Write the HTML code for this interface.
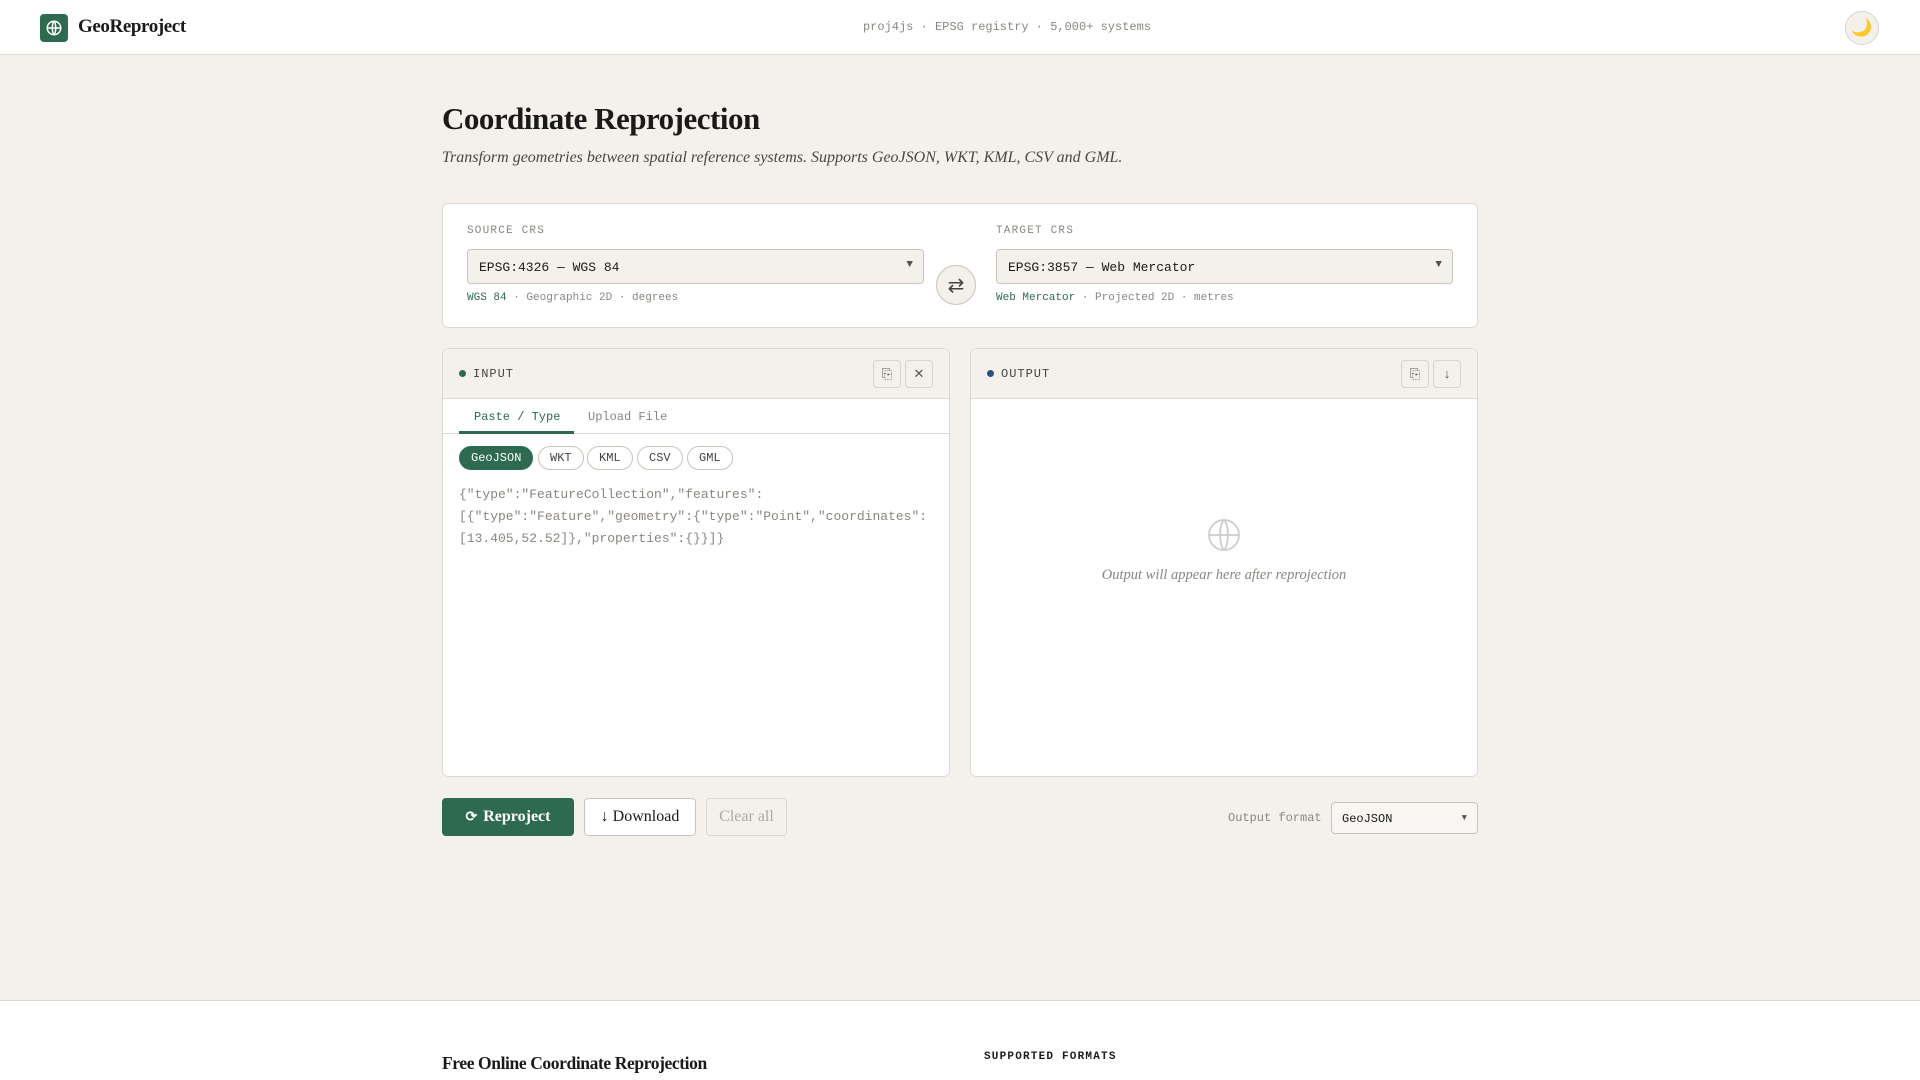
<!DOCTYPE html>
<html><head><meta charset="utf-8"><style>
*{box-sizing:border-box;margin:0;padding:0}
body{width:1920px;height:1080px;overflow:hidden;background:#f4f1ec;font-family:"Liberation Serif",serif;color:#1a1a1a;position:relative}
.mono{font-family:"Liberation Mono",monospace}
.abs{position:absolute}
header{position:absolute;left:0;top:0;width:1920px;height:55px;background:#fff;border-bottom:1px solid #dedad2}
.logo{left:40px;top:14px;width:28px;height:28px;background:#2d6a4f;border-radius:4px;display:flex;align-items:center;justify-content:center}
.brand{left:78px;top:16px;font-size:19px;font-weight:bold;letter-spacing:-0.4px}
.center{left:0;width:2014px;text-align:center;top:20px;font-size:12px;color:#8a8680}
.moon{left:1845px;top:11px;width:34px;height:34px;border-radius:50%;border:1px solid #d8d4cc;background:#f4f1ec;display:flex;align-items:center;justify-content:center;font-size:17px}
h1{position:absolute;left:442px;top:101px;font-size:31px;font-weight:bold;letter-spacing:-0.5px}
.sub{left:442px;top:149px;font-size:16px;font-style:italic;color:#4a4742}
.card{background:#fff;border:1px solid #dedad2;border-radius:6px}
.lbl{font-size:11px;color:#8a8680;letter-spacing:1.2px}
.sel{height:35px;border:1px solid #c9c4ba;border-radius:4px;background:#f4f1ec;font-size:13px;padding:10px 11px;color:#1a1a1a}
.sel .arr{position:absolute;right:10px;top:9px;font-size:11px;color:#555}
.info{font-size:11px;color:#8a8680}
.info b{font-weight:normal;color:#2d6a4f}
.phead{position:absolute;left:0;top:0;right:0;height:50px;background:#f4f1ec;border-bottom:1px solid #dedad2;border-radius:6px 6px 0 0}
.ptitle{position:absolute;left:16px;top:18px;font-size:12px;color:#444;letter-spacing:1px}
.dot{display:inline-block;width:7px;height:7px;border-radius:50%;margin-right:7px;vertical-align:0px}
.ib{position:absolute;top:11px;width:28px;height:28px;border:1px solid #d8d4cc;border-radius:4px;background:#f4f1ec;font-size:13px;color:#555;display:flex;align-items:center;justify-content:center}
.chip{position:absolute;top:446px;height:24px;border:1px solid #c9c4ba;border-radius:12px;font-size:12px;color:#444;padding:4px 11px;background:#fff}
.btn{position:absolute;top:798px;height:38px;border-radius:4px;font-size:16px;display:flex;align-items:center;justify-content:center}
</style></head><body>
<header>
<div class="abs logo"><svg width="18" height="18" viewBox="0 0 24 24" fill="none" stroke="#fff" stroke-width="2"><circle cx="12" cy="12" r="9"/><path d="M3 12h18M12 3c3 3 3 15 0 18M12 3c-3 3-3 15 0 18"/></svg></div>
<div class="abs brand">GeoReproject</div>
<div class="abs center mono">proj4js · EPSG registry · 5,000+ systems</div>
<div class="abs moon">🌙</div>
</header>
<h1>Coordinate Reprojection</h1>
<div class="abs sub">Transform geometries between spatial reference systems. Supports GeoJSON, WKT, KML, CSV and GML.</div>

<div class="abs card" style="left:442px;top:203px;width:1036px;height:125px"></div>
<div class="abs lbl mono" style="left:467px;top:225px">SOURCE CRS</div>
<div class="abs lbl mono" style="left:996px;top:225px">TARGET CRS</div>
<div class="abs sel mono" style="left:467px;top:249px;width:457px">EPSG:4326 — WGS 84<span class="arr">▼</span></div>
<div class="abs sel mono" style="left:996px;top:249px;width:457px">EPSG:3857 — Web Mercator<span class="arr">▼</span></div>
<div class="abs info mono" style="left:467px;top:292px"><b>WGS 84</b> · Geographic 2D · degrees</div>
<div class="abs info mono" style="left:996px;top:292px"><b>Web Mercator</b> · Projected 2D · metres</div>
<div class="abs" style="left:936px;top:265px;width:40px;height:40px;border-radius:50%;border:1px solid #c9c4ba;background:#f4f1ec;display:flex;align-items:center;justify-content:center;font-size:20px;color:#444">⇄</div>

<div class="abs card" style="left:442px;top:348px;width:508px;height:429px">
<div class="phead"><div class="ptitle mono"><span class="dot" style="background:#2d6a4f"></span>INPUT</div>
<div class="ib" style="left:430px">⎘</div><div class="ib" style="left:462px">✕</div></div>
<div class="abs" style="left:0;right:0;top:84px;border-bottom:1px solid #dedad2"></div>
<div class="abs mono" style="left:31px;top:61px;font-size:12px;color:#2d6a4f">Paste / Type</div>
<div class="abs mono" style="left:145px;top:61px;font-size:12px;color:#8a8680">Upload File</div>
<div class="abs" style="left:16px;top:82px;width:115px;height:3px;background:#2d6a4f"></div>
</div>
<div class="chip mono" style="left:459px;background:#2d6a4f;border-color:#2d6a4f;color:#fff">GeoJSON</div>
<div class="chip mono" style="left:538px">WKT</div>
<div class="chip mono" style="left:587px">KML</div>
<div class="chip mono" style="left:637px">CSV</div>
<div class="chip mono" style="left:687px">GML</div>
<div class="abs mono" style="left:459px;top:484px;font-size:13px;line-height:22px;color:#8a8680;white-space:pre">{"type":"FeatureCollection","features":
[{"type":"Feature","geometry":{"type":"Point","coordinates":
[13.405,52.52]},"properties":{}}]}</div>

<div class="abs card" style="left:970px;top:348px;width:508px;height:429px">
<div class="phead"><div class="ptitle mono"><span class="dot" style="background:#2c5282"></span>OUTPUT</div>
<div class="ib" style="left:430px">⎘</div><div class="ib" style="left:462px">↓</div></div>
<svg class="abs" style="left:235px;top:168px" width="36" height="36" viewBox="0 0 24 24" fill="none" stroke="#ccc" stroke-width="1.2"><circle cx="12" cy="12" r="10"/><path d="M2 12h20M12 2c3.5 3 3.5 17 0 20M12 2c-3.5 3-3.5 17 0 20"/></svg>
<div class="abs" style="left:0;right:0;top:218px;text-align:center;font-size:14.5px;font-style:italic;color:#8a8680">Output will appear here after reprojection</div>
</div>

<div class="btn" style="left:442px;width:132px;background:#2d6a4f;color:#fff;font-weight:bold"><span style="font-size:14px;margin-right:6px">⟳</span>Reproject</div>
<div class="btn" style="left:584px;width:112px;background:#fff;border:1px solid #c9c4ba">↓ Download</div>
<div class="btn" style="left:706px;width:81px;border:1px solid #dedad2;color:#aaa">Clear all</div>
<div class="abs mono" style="left:1228px;top:811px;font-size:12px;color:#8a8680">Output format</div>
<div class="abs sel mono" style="left:1331px;top:802px;width:147px;height:32px;background:#f8f6f2;font-size:12px;padding:9px 10px">GeoJSON<span class="arr" style="font-size:9px;top:10px">▼</span></div>

<div class="abs" style="left:0;top:1000px;width:1920px;height:80px;background:#fff;border-top:1px solid #dedad2"></div>
<div class="abs" style="left:442px;top:1053px;font-size:17.5px;font-weight:bold;letter-spacing:-0.4px">Free Online Coordinate Reprojection</div>
<div class="abs mono" style="left:984px;top:1051px;font-size:11px;font-weight:bold;letter-spacing:1.2px">SUPPORTED FORMATS</div>
</body></html>
